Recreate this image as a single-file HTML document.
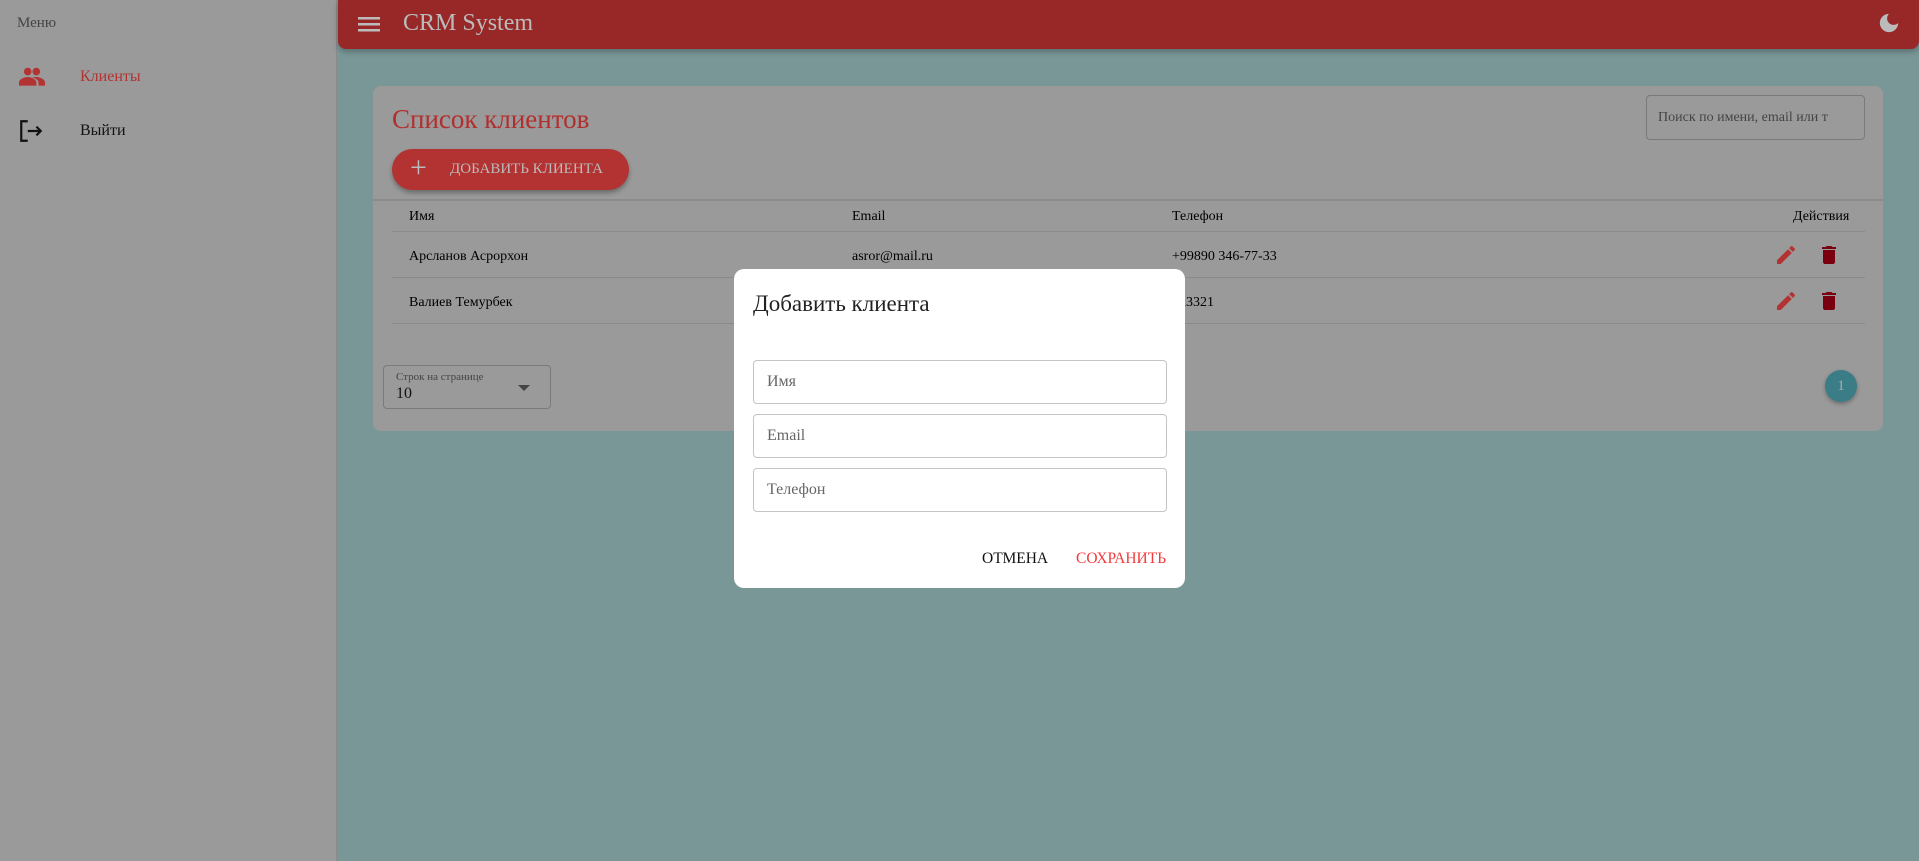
<!DOCTYPE html>
<html><head><meta charset="utf-8"><style>
*{box-sizing:border-box;margin:0;padding:0}
body{width:1919px;height:861px;overflow:hidden;background:#7a9798;font-family:"Liberation Serif","Noto Serif CJK SC",serif;position:relative}
.abs{position:absolute}
.side{left:0;top:0;width:337px;height:861px;background:#9a9a9a;border-right:1px solid #8a8a8a}
.bar{left:338px;top:0;width:1581px;height:49px;background:#982828;border-bottom-left-radius:8px;border-bottom-right-radius:8px;box-shadow:0 3px 6px rgba(0,0,0,.25)}
.card{left:373px;top:86px;width:1510px;height:345px;background:#9a9a9a;border-radius:8px}
.line{height:1px;background:#8a8a8a}
.t{font-size:14px;color:#000}
.dlg{left:734px;top:269px;width:451px;height:319px;background:#fff;border-radius:10px}
.inp{left:19px;width:414px;height:44px;border:1px solid #c4c4c4;border-radius:4px;font-size:16px;color:#666;padding:12px 13px}
</style></head><body>
<div class="abs side">
 <div class="abs" style="left:17px;top:15px;font-size:15px;color:#444">Меню</div>
 <svg class="abs" style="left:19px;top:67px" width="26" height="20" viewBox="0 0 24 18"><circle cx="8" cy="4" r="3.5" fill="#b33232"/><circle cx="16" cy="4" r="3.5" fill="#b33232"/><path d="M0 17v-3c0-3 5-5 8-5s8 2 8 5v3z M12 9.5c1-.3 3-.5 4-.5 3 0 8 2 8 5v3h-6v-3c0-2-2-3.5-6-4.5z" fill="#b33232"/></svg>
 <div class="abs" style="left:80px;top:68px;font-size:16px;color:#b33232">Клиенты</div>
 <svg class="abs" style="left:18px;top:118px" width="26" height="26" viewBox="0 0 24 24" fill="none" stroke="#111" stroke-width="2"><path d="M9 3H3v18h6M9 12h12M17 8l4 4-4 4"/></svg>
 <div class="abs" style="left:80px;top:122px;font-size:16px;color:#111">Выйти</div>
</div>
<div class="abs bar">
 <svg class="abs" style="left:20px;top:15px" width="22" height="18" viewBox="0 0 22 18"><rect y="2" width="22" height="2.5" fill="#bbb"/><rect y="8" width="22" height="2.5" fill="#bbb"/><rect y="14" width="22" height="2.5" fill="#bbb"/></svg>
 <div class="abs" style="left:65px;top:10px;font-size:24px;color:#bbb">CRM System</div>
 <svg class="abs" style="left:1540px;top:12px" width="22" height="22" viewBox="0 0 24 24"><path d="M12 2a10 10 0 1 0 10 10 7 7 0 0 1-10-10z" fill="#bbb"/></svg>
</div>
<div class="abs card">
 <div class="abs" style="left:19px;top:18px;font-size:27px;color:#b32e2e">Список клиентов</div>
 <div class="abs" style="left:1273px;top:9px;width:219px;height:45px;border:1px solid #7a7a7a;border-radius:4px;font-size:14px;color:#444;padding:14px 11px;white-space:nowrap;overflow:hidden">Поиск по имени, email или т</div>
 <div class="abs" style="left:19px;top:63px;width:237px;height:41px;background:#b33232;border-radius:21px;box-shadow:0 3px 5px rgba(0,0,0,.3);color:#bbb;font-size:15px">
  <span class="abs" style="left:18px;top:2px;font-size:30px">+</span><span class="abs" style="left:58px;top:12px">ДОБАВИТЬ КЛИЕНТА</span></div>
 <div class="abs line" style="left:0;top:113px;width:1510px;height:2px"></div>
 <div class="abs t" style="left:36px;top:123px">Имя</div>
 <div class="abs t" style="left:479px;top:123px">Email</div>
 <div class="abs t" style="left:799px;top:123px">Телефон</div>
 <div class="abs t" style="left:1420px;top:123px">Действия</div>
 <div class="abs line" style="left:19px;top:145px;width:1473px"></div>
 <div class="abs t" style="left:36px;top:163px">Арсланов Асрорхон</div>
 <div class="abs t" style="left:479px;top:163px">asror@mail.ru</div>
 <div class="abs t" style="left:799px;top:163px">+99890 346-77-33</div>
 <div class="abs line" style="left:19px;top:191px;width:1473px"></div>
 <div class="abs t" style="left:36px;top:209px">Валиев Темурбек</div>
 <div class="abs t" style="left:799px;top:209px">323321</div>
 <div class="abs line" style="left:19px;top:237px;width:1473px"></div>
 <svg class="abs" style="left:1401px;top:157px" width="24" height="24" viewBox="0 0 24 24"><path d="M3 17.25V21h3.75L17.8 9.94l-3.75-3.75zM20.7 7.04a1 1 0 0 0 0-1.41l-2.34-2.34a1 1 0 0 0-1.41 0l-1.83 1.83 3.75 3.75z" fill="#b33232"/></svg>
 <svg class="abs" style="left:1444px;top:157px" width="24" height="24" viewBox="0 0 24 24"><path d="M6 19c0 1.1.9 2 2 2h8c1.1 0 2-.9 2-2V7H6zM19 4h-3.5l-1-1h-5l-1 1H5v2h14z" fill="#7a0010"/></svg>
 <svg class="abs" style="left:1401px;top:203px" width="24" height="24" viewBox="0 0 24 24"><path d="M3 17.25V21h3.75L17.8 9.94l-3.75-3.75zM20.7 7.04a1 1 0 0 0 0-1.41l-2.34-2.34a1 1 0 0 0-1.41 0l-1.83 1.83 3.75 3.75z" fill="#b33232"/></svg>
 <svg class="abs" style="left:1444px;top:203px" width="24" height="24" viewBox="0 0 24 24"><path d="M6 19c0 1.1.9 2 2 2h8c1.1 0 2-.9 2-2V7H6zM19 4h-3.5l-1-1h-5l-1 1H5v2h14z" fill="#7a0010"/></svg>
 <div class="abs" style="left:10px;top:279px;width:168px;height:44px;border:1px solid #7a7a7a;border-radius:4px">
  <div class="abs" style="left:12px;top:5px;font-size:11px;color:#444">Строк на странице</div>
  <div class="abs" style="left:12px;top:19px;font-size:16px;color:#111">10</div>
  <div class="abs" style="left:134px;top:19px;width:0;height:0;border-left:6px solid transparent;border-right:6px solid transparent;border-top:6px solid #444"></div>
 </div>
 <div class="abs" style="left:1452px;top:284px;width:32px;height:32px;border-radius:50%;background:#3a7d86;box-shadow:0 2px 4px rgba(0,0,0,.3);color:#aaa;font-size:15px;text-align:center;line-height:32px">1</div>
</div>
<div class="abs dlg">
 <div class="abs" style="left:19px;top:22px;font-size:23px;color:#222">Добавить клиента</div>
 <div class="abs inp" style="top:91px">Имя</div>
 <div class="abs inp" style="top:145px">Email</div>
 <div class="abs inp" style="top:199px">Телефон</div>
 <div class="abs" style="left:248px;top:281px;font-size:15.5px;color:#111">ОТМЕНА</div>
 <div class="abs" style="left:342px;top:281px;font-size:15.5px;color:#f03c3c">СОХРАНИТЬ</div>
</div>
</body></html>
